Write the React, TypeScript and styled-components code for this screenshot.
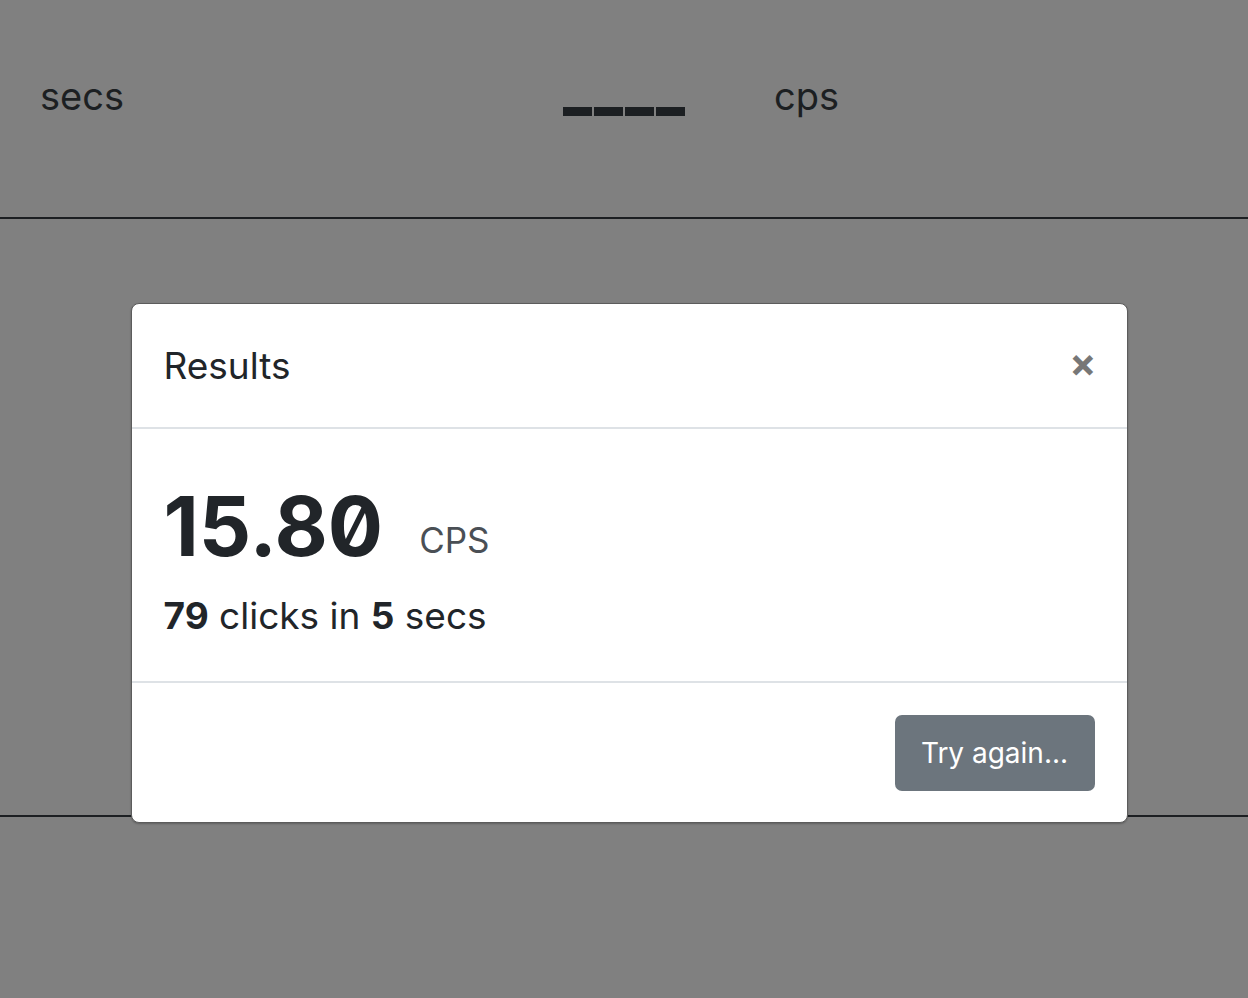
import React from "react";
import styled, { createGlobalStyle } from "styled-components";

const GlobalStyle = createGlobalStyle`
  html, body {
    margin: 0;
    padding: 0;
    background: #808080;
    font-family: Inter, "Noto Sans", sans-serif;
    color: #1c1f22;
  }
`;

const Page = styled.div`
  width: 1248px;
  height: 998px;
  overflow: hidden;
  position: relative;
  background: #808080;
`;

const StatsBar = styled.div`
  height: 219px;
  display: flex;
  align-items: flex-start;
  padding: 72px 40px 0;
  box-sizing: border-box;
  border-bottom: 2px solid #1c1f22;
`;

const StatLabel = styled.span<{ $left: number }>`
  font-size: 38px;
  line-height: 48px;
  margin-left: ${({ $left }) => $left}px;
  color: #1c1f22;
`;

const Blanks = styled.span`
  display: inline-flex;
  gap: 2px;
  margin: 35px 0 0 439px;
`;

const Dash = styled.span`
  width: 29px;
  height: 9px;
  background: #1c1f22;
`;

const ClickArea = styled.div`
  height: 596px;
  border-bottom: 2px solid #1c1f22;
`;

const Backdrop = styled.div`
  position: absolute;
  inset: 0;
  display: flex;
  justify-content: center;
  align-items: flex-start;
  padding: 303px 0 0 10px;
`;

const Modal = styled.div`
  width: 997px;
  box-sizing: border-box;
  background: #fff;
  border: 1px solid #5c5c5c;
  border-radius: 8px;
  box-shadow: 0 1px 2px rgba(0, 0, 0, 0.25);
`;

const Header = styled.div`
  height: 125px;
  box-sizing: border-box;
  display: flex;
  align-items: center;
  justify-content: space-between;
  padding: 0 32px;
  border-bottom: 2px solid #dee2e6;
`;

const Title = styled.h5`
  margin: 0;
  font-size: 37px;
  font-weight: 400;
  color: #212529;
`;

const Close = styled.span`
  font-size: 40px;
  font-weight: 700;
  color: #777;
  margin-right: -2px;
  margin-top: -6px;
`;

const Body = styled.div`
  padding: 56px 32px 43px;
  border-bottom: 2px solid #dee2e6;
`;

const ScoreRow = styled.div`
  display: flex;
  align-items: baseline;
  gap: 36px;
`;

const Score = styled.span`
  font-size: 82px;
  font-weight: 700;
  line-height: 84px;
  font-variant-numeric: slashed-zero;
  color: #212529;
`;

const Unit = styled.span`
  font-size: 35px;
  color: #4a4f55;
  position: relative;
  top: -3px;
`;

const Summary = styled.p`
  margin: 24px 0 0;
  font-size: 37px;
  color: #212529;

  b {
    font-weight: 700;
  }
`;

const Footer = styled.div`
  height: 139px;
  box-sizing: border-box;
  display: flex;
  justify-content: flex-end;
  align-items: center;
  padding: 0 32px;
`;

const Button = styled.button`
  width: 200px;
  height: 76px;
  border: none;
  border-radius: 7px;
  background: #6c757d;
  color: #fff;
  font-family: Inter, "Noto Sans", sans-serif;
  font-size: 28px;
  cursor: pointer;
`;

const App: React.FC = () => {
  return (
    <Page>
      <GlobalStyle />
      <StatsBar>
        <StatLabel $left={0}>secs</StatLabel>
        <Blanks>
          <Dash />
          <Dash />
          <Dash />
          <Dash />
        </Blanks>
        <StatLabel $left={89}>cps</StatLabel>
      </StatsBar>
      <ClickArea />
      <Backdrop>
        <Modal>
          <Header>
            <Title>Results</Title>
            <Close>×</Close>
          </Header>
          <Body>
            <ScoreRow>
              <Score>15.80</Score>
              <Unit>CPS</Unit>
            </ScoreRow>
            <Summary>
              <b>79</b> clicks in <b>5</b> secs
            </Summary>
          </Body>
          <Footer>
            <Button>Try again...</Button>
          </Footer>
        </Modal>
      </Backdrop>
    </Page>
  );
};

export default App;
